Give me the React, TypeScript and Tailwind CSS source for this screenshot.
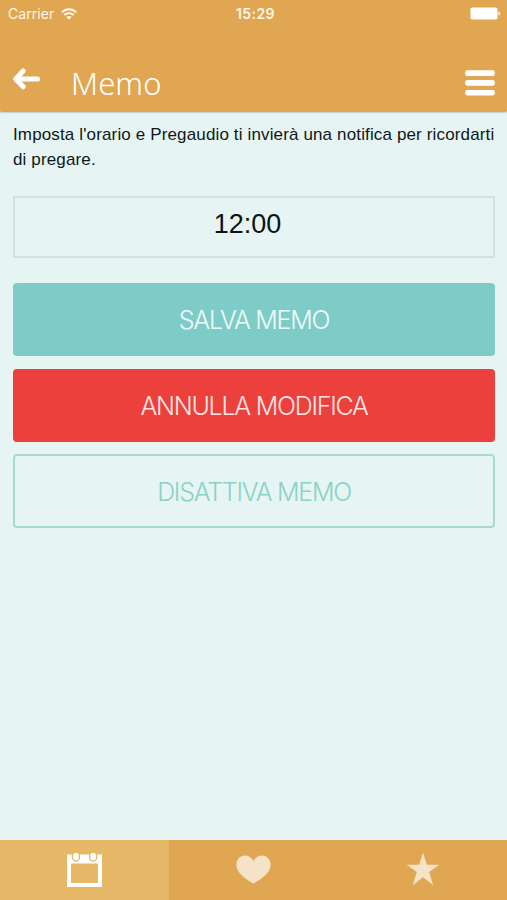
import { clsx } from 'clsx'
import type { ReactNode } from 'react'

function WifiIcon() {
  return (
    <svg width="16" height="12" viewBox="0 0 16 12" fill="none" stroke="#fff8ec" strokeWidth="2">
      <path d="M0.8 4.4C5 0.3 11 0.3 15.2 4.4" />
      <path d="M3.3 7.1C6.1 4.5 9.9 4.5 12.7 7.1" />
      <path d="M8 11.8L5.4 9.1C7 7.7 9 7.7 10.6 9.1Z" fill="#fff8ec" stroke="none" />
    </svg>
  )
}

function BatteryIcon() {
  return (
    <svg width="31" height="13" viewBox="0 0 31 13" fill="#fff">
      <rect x="0.5" y="0.5" width="27" height="12" rx="1.8" />
      <path d="M28.5 4.5C30.6 5 30.6 8 28.5 8.5Z" />
    </svg>
  )
}

function BackIcon() {
  return (
    <svg width="28" height="22" viewBox="0 0 28 22" fill="none" stroke="#fff" strokeLinecap="round" strokeLinejoin="round">
      <path d="M11.2 3L3.7 11L11.2 18.8" strokeWidth="5" />
      <path d="M4.4 11H25.4" strokeWidth="5.2" />
    </svg>
  )
}

function MenuIcon() {
  return (
    <svg width="30" height="26" viewBox="0 0 30 26" fill="#fff">
      <rect x="0.2" y="0.3" width="29.6" height="5.6" rx="2.2" />
      <rect x="0.2" y="10.1" width="29.6" height="5.6" rx="2.2" />
      <rect x="0.2" y="19.9" width="29.6" height="5.6" rx="2.2" />
    </svg>
  )
}

function CalendarIcon() {
  return (
    <svg width="35" height="36" viewBox="0 0 35 36">
      <path fill="#fff" fillRule="evenodd" d="M0 2.5H35V35H0ZM4 11.5V31H31V11.5Z" />
      <rect x="5.4" y="0" width="7" height="9" rx="3.5" fill="#fff" stroke="#e5b667" strokeWidth="1.3" />
      <rect x="22.6" y="0" width="7" height="9" rx="3.5" fill="#fff" stroke="#e5b667" strokeWidth="1.3" />
    </svg>
  )
}

function HeartIcon() {
  return (
    <svg width="35" height="29" viewBox="0 0 35 29" fill="#f4e3c9">
      <path d="M17.5 28.5C13.5 26.5 0.3 19.2 0.3 9.6C0.3 4.3 4.3 0.5 9 0.5C12.8 0.5 16 2.8 17.5 6.2C19 2.8 22.2 0.5 26 0.5C30.7 0.5 34.7 4.3 34.7 9.6C34.7 19.2 21.5 26.5 17.5 28.5Z" />
    </svg>
  )
}

function StarIcon() {
  return (
    <svg width="34" height="34" viewBox="0 0 34 34" fill="#f4e3c9">
      <path d="M17 0.5L20.8 12.7H33.4L23.2 20.1L27.3 33.2L17 25.2L6.7 33.2L10.8 20.1L0.6 12.7H13.2Z" />
    </svg>
  )
}

function Button({ className, children }: { className?: string; children: ReactNode }) {
  return (
    <button
      className={clsx(
        "flex w-full items-center justify-center rounded pt-[3px] font-['Inter','Liberation_Sans',sans-serif] text-[25px] font-light tracking-[-1.25px] whitespace-nowrap",
        className,
      )}
    >
      {children}
    </button>
  )
}

function Tab({ active, children }: { active?: boolean; children: ReactNode }) {
  return (
    <button className={clsx('flex flex-1 items-start justify-center pt-[12px]', active && 'bg-[#e6b766]')}>
      {children}
    </button>
  )
}

export default function App() {
  return (
    <div className="flex h-[900px] w-[507px] flex-col overflow-hidden bg-[#e6f5f4] font-['Liberation_Sans',Arial,sans-serif]">
      <header className="z-10 h-[111px] bg-[#e0a651] shadow-[0_1px_2px_rgba(90,80,50,0.6)]">
        <div className="grid h-[27px] grid-cols-3 items-center pr-[6px] pl-2 font-['Inter',sans-serif] text-[14px] text-[#fff8ec]">
          <div className="flex items-center gap-[7px]">
            <span className="tracking-[0.05px]">Carrier</span>
            <WifiIcon />
          </div>
          <span className="pl-[2px] text-center font-semibold tracking-[0.4px]">15:29</span>
          <div className="flex justify-end">
            <BatteryIcon />
          </div>
        </div>
        <div className="flex h-[84px] items-start px-3">
          <div className="pt-[41px]">
            <BackIcon />
          </div>
          <h1 className="ml-[31px] flex-1 pt-[35px] font-['Noto_Sans','Open_Sans',sans-serif] text-[31px] leading-[42px] font-[350] tracking-[0.1px] text-white">
            Memo
          </h1>
          <div className="pt-[43px]">
            <MenuIcon />
          </div>
        </div>
      </header>

      <main className="flex-1 pt-[11px] pr-3 pl-[13px]">
        <p className="text-[17px] leading-[25px] tracking-[0.14px] whitespace-nowrap text-[#101817]">
          Imposta l'orario e Pregaudio ti invierà una notifica per ricordarti
          <br />
          di pregare.
        </p>
        <div className="mt-6 flex h-[62px] items-center justify-center border-2 border-[#d3e1df] pr-[13px] pb-[5px] text-[27px] text-[#0c1413]">
          12:00
        </div>
        <div className="mt-[25px] flex flex-col gap-3">
          <Button className="mb-px h-[73px] bg-[#7eccc7] text-[#f1fbfa]">SALVA MEMO</Button>
          <Button className="h-[73px] bg-[#eb403b] text-[#fde6e5]">ANNULLA MODIFICA</Button>
          <Button className="h-[74px] border-2 border-[#a6dace] text-[#8ad2c4]">DISATTIVA MEMO</Button>
        </div>
      </main>

      <nav className="flex h-[60px] bg-[#e0a651]">
        <Tab active>
          <CalendarIcon />
        </Tab>
        <Tab>
          <div className="pt-[3px]">
            <HeartIcon />
          </div>
        </Tab>
        <Tab>
          <StarIcon />
        </Tab>
      </nav>
    </div>
  )
}
